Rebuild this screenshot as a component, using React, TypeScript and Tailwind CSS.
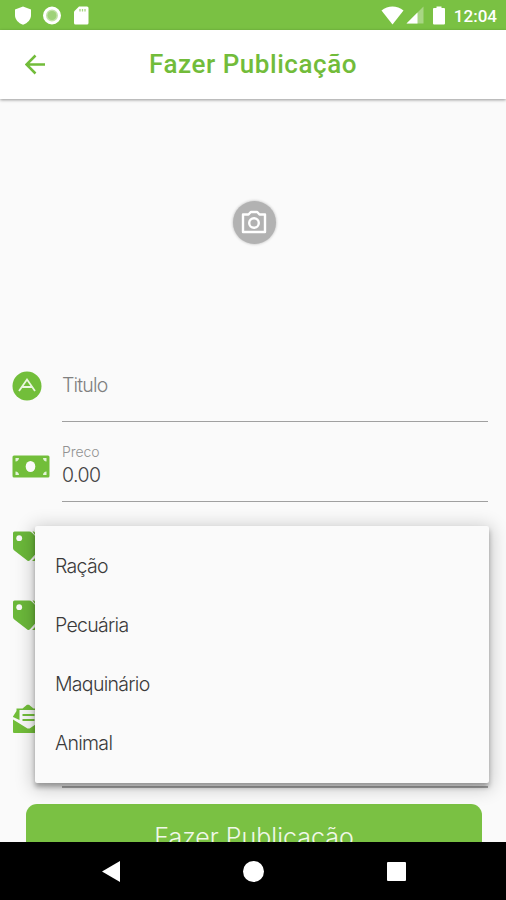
import type { ReactNode } from "react";

const categories = ["Ração", "Pecuária", "Maquinário", "Animal"];

const StatusBar = () => {
  return (
    <div className="flex h-[30px] shrink-0 items-center justify-between bg-[#7ac143] pr-[9px] pl-[14px] text-white">
      <div className="flex items-center gap-[11px]">
        <svg className="h-[19px] w-[18px]" viewBox="0 0 18 19" fill="currentColor">
          <path d="M9 .5 17 3.5v5.5c0 4.5-3.2 8-8 9.800C4.200 17 1 13.500 1 9V3.500z" />
        </svg>
        <svg className="h-[19px] w-[18px]" viewBox="0 0 18 19">
          <circle cx="9" cy="9.500" r="7.500" fill="#c3e3a9" stroke="#fff" strokeWidth="3" />
          <circle cx="9" cy="9.500" r="4.500" fill="#9fd279" />
        </svg>
        <svg className="h-[19px] w-[18px]" viewBox="0 0 18 19" fill="currentColor">
          <path d="M7 .5h8a1.500 1.500 0 0 1 1.500 1.500v15a1.500 1.500 0 0 1-1.500 1.500H3.500A1.500 1.500 0 0 1 2 17V5.500z" />
          <path d="M8 3v2.500M10.500 3v2.500M13 3v2.500" stroke="#a5d580" strokeWidth="1.300" />
        </svg>
      </div>
      <div className="flex items-center">
        <svg className="mr-[2px] h-[19px] w-[23px]" viewBox="0 0 23 19" fill="currentColor">
          <path d="M.5 4.500C7-1 16-1 22.500 4.500L11.500 18.500z" />
        </svg>
        <svg className="mr-[9px] h-[18px] w-[18px]" viewBox="0 0 18 18" fill="currentColor">
          <path d="M17.500 .500V17.500H.500z" opacity=".35" />
          <path d="M11.500 6.500V17.500H.500z" />
        </svg>
        <svg className="mr-[9px] h-[19px] w-[12px]" viewBox="0 0 12 19" fill="currentColor">
          <path d="M3.500 .500h5v1.500H11a1 1 0 0 1 1 1v14.500a1 1 0 0 1-1 1H1a1 1 0 0 1-1-1V3a1 1 0 0 1 1-1h2.500z" />
        </svg>
        <span className="pt-[1px] font-[Roboto] text-[17px] leading-5 font-medium">12:04</span>
      </div>
    </div>
  );
};

const Header = () => {
  return (
    <div className="relative flex h-[69px] shrink-0 items-center bg-white pl-[25px] text-[#72bc3a] shadow-[0_1px_3px_rgba(0,0,0,0.4)]">
      <svg className="h-[21px] w-[21px]" viewBox="0 0 21 21" fill="none" stroke="currentColor" strokeWidth="2.500">
        <path d="M20 10.500H2M10.500 1.500l-9 9 9 9" />
      </svg>
      <h1 className="-mt-[2px] ml-[103px] font-[Roboto] text-[26px] leading-8 font-medium tracking-[0.55px]">
        Fazer Publicação
      </h1>
    </div>
  );
};

const TitleIcon = () => (
  <svg className="-mt-px h-[30px] w-[30px]" viewBox="0 0 30 30">
    <circle cx="15" cy="15" r="14.500" fill="#72be3a" />
    <path d="M7 20 15 8.500l8 11.500M10.500 16h9.500" fill="none" stroke="#eaf6df" strokeWidth="1.800" />
  </svg>
);

const MoneyIcon = () => (
  <svg className="h-[23px] w-[38px]" viewBox="0 0 38 23">
    <rect x=".5" y=".5" width="37" height="22" rx="1.500" fill="#72be3a" />
    <ellipse cx="18.500" cy="11.500" rx="4.800" ry="5.500" fill="#fafafa" />
    <path d="M3.500 3h3.500a4 4 0 0 1-3.500 3.500zM34.500 3H31a4 4 0 0 0 3.500 3.500zM3.500 20H7a4 4 0 0 0-3.500-3.500zM34.500 20H31a4 4 0 0 1 3.500-3.500z" fill="#e4f3d8" />
  </svg>
);

const TagsIcon = () => (
  <svg className="h-[31px] w-[38px]" viewBox="0 0 38 31">
    <path d="M20.500 .5h1.500l13.500 14.500a3 3 0 0 1 0 4L24 30h-4l12-12a2 2 0 0 0 0-2z" fill="#72be3a" />
    <path d="M2.500 .5h14.500a4 4 0 0 1 3 1.200L30 12a3 3 0 0 1 0 4L18.200 29a2.500 2.500 0 0 1-3.600 0L2 19.200A3 3 0 0 1 1 17V2A1.500 1.500 0 0 1 2.500 .5z" fill="#6bb83a" />
    <circle cx="7.200" cy="7.200" r="2.900" fill="#fafafa" />
  </svg>
);

const MailIcon = () => (
  <svg className="h-[30px] w-[31px]" viewBox="0 0 31 30">
    <path d="M1 12.500 4.500 7V4.500h6L15 .8h2l4.500 3.700h6V7L31 12.500V28a1 1 0 0 1-1 1H2a1 1 0 0 1-1-1z" fill="#72be3a" />
    <path d="M7.500 6h18v9L31 13v2.500L17.500 24.500h-2L1 15.500V13l6.500 3z" fill="#fafafa" />
    <path d="M10.500 11h12M10.500 16h12" stroke="#72be3a" strokeWidth="2.200" />
  </svg>
);

const Row = ({ icon, className, children }: { icon: ReactNode; className: string; children?: ReactNode }) => {
  return (
    <div className={`flex shrink-0 pr-[18px] pl-3 ${className}`}>
      <div className="w-[50px] shrink-0">{icon}</div>
      <div className="flex-1">{children}</div>
    </div>
  );
};

const CategoryMenu = () => {
  return (
    <ul className="absolute top-[526px] left-[35px] h-[257px] w-[454px] rounded-[2px] bg-[#fafafa] pt-[11px] pl-5 shadow-[0_4px_5px_rgba(0,0,0,0.3),0_3px_18px_3px_rgba(0,0,0,0.2)]">
      {categories.map((category) => (
        <li key={category} className="flex h-[59px] items-center text-[19.500px] font-light tracking-[-0.7px] text-[#3a3a3a]">
          {category}
        </li>
      ))}
    </ul>
  );
};

const NavigationBar = () => {
  return (
    <div className="flex h-[58px] shrink-0 items-center justify-between bg-black pr-[100px] pl-[102px] text-white">
      <svg className="h-[21px] w-[18px]" viewBox="0 0 18 21" fill="currentColor">
        <path d="M18 0v21L0 10.500z" />
      </svg>
      <div className="size-[21px] rounded-full bg-white" />
      <div className="size-[19px] rounded-[1px] bg-white" />
    </div>
  );
};

const App = () => {
  return (
    <div className="relative flex h-[900px] w-[506px] flex-col overflow-hidden bg-[#fafafa] font-[Inter,'Liberation_Sans',sans-serif]">
      <StatusBar />
      <Header />
      <main className="flex min-h-0 flex-1 flex-col overflow-hidden">
        <div className="flex h-[273px] shrink-0 justify-center pt-[102px] pl-[2px]">
          <div className="flex size-[43px] items-center justify-center rounded-full bg-[#b2b2b2] shadow-[0_0_3px_#b2b2b2]">
            <svg className="-mt-[2px] h-[24px] w-[26px]" viewBox="0 0 26 24" fill="none" stroke="#fff" strokeWidth="2.400">
              <path d="M2 4.500h5.500L9.800 2h6.400l2.300 2.500H24v17.500H2z" strokeLinejoin="round" />
              <circle cx="13" cy="13" r="4.800" />
            </svg>
          </div>
        </div>

        <Row icon={<TitleIcon />} className="h-[71px]">
          <div className="h-[50px] border-b border-[#a0a0a0] pt-[1px] text-[19.500px] leading-6 font-light tracking-[-0.800px] text-[#808080]">
            Titulo
          </div>
        </Row>

        <Row icon={<div className="pt-[12px]"><MoneyIcon /></div>} className="h-[88px]">
          <div className="h-[59px] border-b border-[#a0a0a0] font-light">
            <p className="text-[14px] leading-[18px] tracking-[-0.1px] text-[#929292]">Preco</p>
            <p className="pt-[2px] text-[19.500px] leading-[24px] tracking-[-0.5px] text-[#444]">0.00</p>
          </div>
        </Row>

        <Row icon={<TagsIcon />} className="h-[69px]" />
        <Row icon={<TagsIcon />} className="h-[104px]" />
        <Row icon={<MailIcon />} className="h-[100px]">
          <div className="h-[84px] border-b-2 border-[#aaa]" />
        </Row>

        <button className="mr-6 ml-[26px] h-[62px] shrink-0 rounded-[11px] bg-[#7ac143] pt-[5px] text-[25px] font-light text-[#f0f8e9]">
          Fazer Publicação
        </button>
      </main>
      <CategoryMenu />
      <NavigationBar />
    </div>
  );
};

export default App;
